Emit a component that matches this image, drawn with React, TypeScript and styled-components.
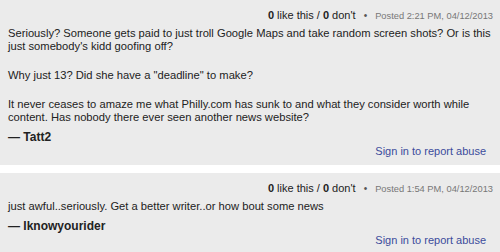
import styled, { createGlobalStyle } from 'styled-components'

const comments = [
  {
    id: 1,
    likes: 0,
    dislikes: 0,
    posted: '2:21 PM, 04/12/2013',
    paragraphs: [
      'Seriously? Someone gets paid to just troll Google Maps and take random screen shots? Or is this just somebody\'s kidd goofing off?',
      'Why just 13? Did she have a "deadline" to make?',
      'It never ceases to amaze me what Philly.com has sunk to and what they consider worth\u00a0while content. Has nobody there ever seen another news website?',
    ],
    author: 'Tatt2',
  },
  {
    id: 2,
    likes: 0,
    dislikes: 0,
    posted: '1:54 PM, 04/12/2013',
    paragraphs: ['just awful..seriously. Get a better writer..or how bout some news'],
    author: 'Iknowyourider',
  },
]

export default function App() {
  return (
    <>
      <GlobalStyle />
      <CommentList>
        {comments.map((c) => (
          <Comment key={c.id}>
            <Meta>
              <Votes>
                <b>{c.likes}</b> like this / <b>{c.dislikes}</b> don't
              </Votes>
              <Bullet>•</Bullet>
              <Posted>Posted {c.posted}</Posted>
            </Meta>
            <Body>
              {c.paragraphs.map((p, i) => (
                <p key={i}>{p}</p>
              ))}
            </Body>
            <Author>— {c.author}</Author>
            <ReportRow>
              <ReportLink href="#">Sign in to report abuse</ReportLink>
            </ReportRow>
          </Comment>
        ))}
      </CommentList>
    </>
  )
}

const GlobalStyle = createGlobalStyle`
  body {
    margin: 0;
    background: #ebebeb;
    font-family: "Liberation Sans", Arial, sans-serif;
    color: #222;
  }
`

const CommentList = styled.div`
  display: flex;
  flex-direction: column;
`

const Comment = styled.div`
  padding: 8px 7px 7px 8px;
  border-bottom: 8px solid #fff;
`

const Meta = styled.div`
  display: flex;
  justify-content: flex-end;
  align-items: baseline;
  font-size: 11px;
  line-height: 14px;
  color: #222;
`

const Votes = styled.span`
  b {
    font-weight: 700;
  }
`

const Bullet = styled.span`
  margin: 0 8px;
  color: #555;
  font-size: 10px;
`

const Posted = styled.span`
  font-size: 9.3px;
  color: #777;
`

const Body = styled.div`
  margin: 4px -7px 0 0;
  font-size: 11.2px;
  line-height: 13px;

  p {
    margin: 0 0 16px;
  }

  p:last-child {
    margin-bottom: 0;
  }
`

const Author = styled.div`
  margin-top: 6px;
  font-size: 12px;
  line-height: 14px;
  font-weight: 700;
`

const ReportRow = styled.div`
  display: flex;
  justify-content: flex-end;
  padding-right: 7px;
  line-height: 14px;
`

const ReportLink = styled.a`
  font-size: 11px;
  color: #3b4c9c;
  text-decoration: none;
`
